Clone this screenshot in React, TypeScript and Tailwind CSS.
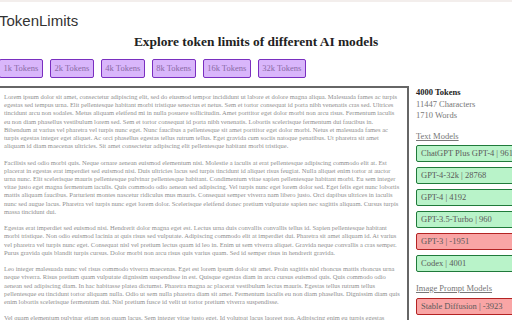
const sizes = ["1k", "2k", "4k", "8k", "16k", "32k"];

const text = `Lorem ipsum dolor sit amet, consectetur adipiscing elit, sed do eiusmod tempor incididunt ut labore et dolore magna aliqua. Malesuada fames ac turpis egestas sed tempus urna. Elit pellentesque habitant morbi tristique senectus et netus. Sem et tortor consequat id porta nibh venenatis cras sed. Ultrices tincidunt arcu non sodales. Metus aliquam eleifend mi in nulla posuere sollicitudin. Amet porttitor eget dolor morbi non arcu risus. Fermentum iaculis eu non diam phasellus vestibulum lorem sed. Sem et tortor consequat id porta nibh venenatis. Lobortis scelerisque fermentum dui faucibus in. Bibendum at varius vel pharetra vel turpis nunc eget. Nunc faucibus a pellentesque sit amet porttitor eget dolor morbi. Netus et malesuada fames ac turpis egestas integer eget aliquet. Ac orci phasellus egestas tellus rutrum tellus. Eget gravida cum sociis natoque penatibus. Ut pharetra sit amet aliquam id diam maecenas ultricies. Sit amet consectetur adipiscing elit pellentesque habitant morbi tristique.

Facilisis sed odio morbi quis. Neque ornare aenean euismod elementum nisi. Molestie a iaculis at erat pellentesque adipiscing commodo elit at. Est placerat in egestas erat imperdiet sed euismod nisi. Duis ultricies lacus sed turpis tincidunt id aliquet risus feugiat. Nulla aliquet enim tortor at auctor urna nunc. Elit scelerisque mauris pellentesque pulvinar pellentesque habitant. Condimentum vitae sapien pellentesque habitant morbi. Eu sem integer vitae justo eget magna fermentum iaculis. Quis commodo odio aenean sed adipiscing. Vel turpis nunc eget lorem dolor sed. Eget felis eget nunc lobortis mattis aliquam faucibus. Parturient montes nascetur ridiculus mus mauris. Consequat semper viverra nam libero justo. Orci dapibus ultrices in iaculis nunc sed augue lacus. Pharetra vel turpis nunc eget lorem dolor. Scelerisque eleifend donec pretium vulputate sapien nec sagittis aliquam. Cursus turpis massa tincidunt dui.

Egestas erat imperdiet sed euismod nisi. Hendrerit dolor magna eget est. Lectus urna duis convallis convallis tellus id. Sapien pellentesque habitant morbi tristique. Non odio euismod lacinia at quis risus sed vulputate. Adipiscing commodo elit at imperdiet dui. Pharetra sit amet aliquam id. At varius vel pharetra vel turpis nunc eget. Consequat nisl vel pretium lectus quam id leo in. Enim ut sem viverra aliquet. Gravida neque convallis a cras semper. Purus gravida quis blandit turpis cursus. Dolor morbi non arcu risus quis varius quam. Sed id semper risus in hendrerit gravida.

Leo integer malesuada nunc vel risus commodo viverra maecenas. Eget est lorem ipsum dolor sit amet. Proin sagittis nisl rhoncus mattis rhoncus urna neque viverra. Risus pretium quam vulputate dignissim suspendisse in est. Quisque egestas diam in arcu cursus euismod quis. Quis commodo odio aenean sed adipiscing diam. In hac habitasse platea dictumst. Pharetra magna ac placerat vestibulum lectus mauris. Egestas tellus rutrum tellus pellentesque eu tincidunt tortor aliquam nulla. Odio ut sem nulla pharetra diam sit amet. Fermentum iaculis eu non diam phasellus. Dignissim diam quis enim lobortis scelerisque fermentum dui. Nisl pretium fusce id velit ut tortor pretium viverra suspendisse.

Vel quam elementum pulvinar etiam non quam lacus. Sem integer vitae justo eget. Id volutpat lacus laoreet non. Adipiscing enim eu turpis egestas pretium aenean pharetra magna ac.`;

const textModels = [
  { name: "ChatGPT Plus GPT-4", left: 9616, ok: true },
  { name: "GPT-4-32k", left: 28768, ok: true },
  { name: "GPT-4", left: 4192, ok: true },
  { name: "GPT-3.5-Turbo", left: 960, ok: true },
  { name: "GPT-3", left: -1951, ok: false },
  { name: "Codex", left: 4001, ok: true },
];

function ModelBox({ name, left, ok }: { name: string; left: number; ok: boolean }) {
  return (
    <div
      className={`h-[17px] w-[150px] shrink-0 flex items-center pl-[4px] border-[1.5px] rounded-[2px] whitespace-nowrap text-[8.5px] text-[#5a5a5a] ${
        ok ? "bg-[#b9f3c9] border-[#1f7a3a]" : "bg-[#f9a5a5] border-[#b42323]"
      }`}
    >
      {name} | {left}
    </div>
  );
}

export default function App() {
  return (
    <div className="w-[512px] h-[320px] overflow-hidden bg-white font-['Liberation_Serif',serif] text-[#222]">
      <div className="h-[2px] bg-[#f3eeec]" />
      <div className="-ml-[1px] pt-[9px] h-[30px] font-['Liberation_Sans',sans-serif] text-[15px] leading-[20px] text-[#333]">
        TokenLimits
      </div>
      <h1 className="text-center font-bold text-[13.4px] leading-[18px] text-[#222] mt-[1px]">
        Explore token limits of different AI models
      </h1>
      <div className="flex gap-[7px] mt-[8px] -ml-[1px]">
        {sizes.map((s) => (
          <button
            key={s}
            className="h-[19px] px-[3.5px] bg-[#d9b6fb] border-[1.5px] border-[#7a2fc0] rounded-[2px] text-[8.5px] text-[#8a6aa6] leading-none"
          >
            {s} Tokens
          </button>
        ))}
      </div>
      <div className="flex mt-[8px] gap-[7px]">
        <div className="w-[409px] h-[240px] shrink-0 border-t-2 border-r-2 border-[#666] overflow-hidden pl-[4px] pr-[6px] pt-[5px] text-[6.5px] leading-[8.2px] text-[#8f8f8f] whitespace-pre-wrap">
          {text}
        </div>
        <div className="flex flex-col min-w-0 pt-[1px]">
          <div className="text-[8.5px] leading-[11.6px] font-bold text-[#222]">4000 Tokens</div>
          <div className="text-[8.5px] leading-[11.6px] text-[#777]">11447 Characters</div>
          <div className="text-[8.5px] leading-[11.6px] text-[#777]">1710 Words</div>
          <div className="mt-[8px] text-[8.5px] leading-[12px] text-[#777] underline">Text Models</div>
          <div className="flex flex-col gap-[5px] mt-[3px]">
            {textModels.map((m) => (
              <ModelBox key={m.name} {...m} />
            ))}
          </div>
          <div className="mt-[10px] text-[8.5px] leading-[12px] text-[#777] underline">Image Prompt Models</div>
          <div className="mt-[4px]">
            <ModelBox name="Stable Diffusion" left={-3923} ok={false} />
          </div>
        </div>
      </div>
    </div>
  );
}
